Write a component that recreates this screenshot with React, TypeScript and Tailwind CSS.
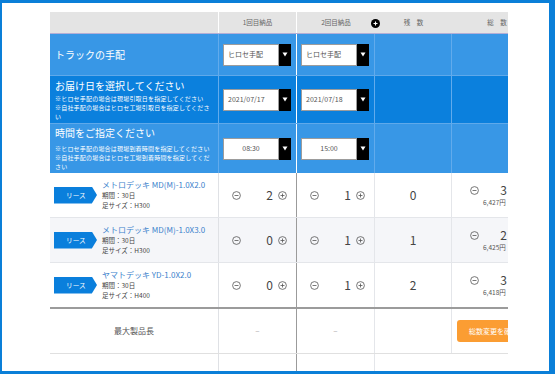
import React from 'react';

const C1 = 'w-[169px] shrink-0';
const C2 = 'w-[78px] shrink-0';
const C3 = 'w-[78px] shrink-0';
const C4 = 'w-[77px] shrink-0';
const C5 = 'w-[90px] shrink-0';

function MinusIcon() {
  return (
    <svg width="9" height="9" viewBox="0 0 9 9" className="shrink-0">
      <circle cx="4.5" cy="4.5" r="3.9" fill="none" stroke="#555" strokeWidth="0.8" />
      <line x1="2.5" y1="4.5" x2="6.5" y2="4.5" stroke="#555" strokeWidth="0.8" />
    </svg>
  );
}

function PlusIcon() {
  return (
    <svg width="9" height="9" viewBox="0 0 9 9" className="shrink-0">
      <circle cx="4.5" cy="4.5" r="3.9" fill="none" stroke="#555" strokeWidth="0.8" />
      <line x1="2.5" y1="4.5" x2="6.5" y2="4.5" stroke="#555" strokeWidth="0.8" />
      <line x1="4.5" y1="2.5" x2="4.5" y2="6.5" stroke="#555" strokeWidth="0.8" />
    </svg>
  );
}

function Select({ value, center }: { value: string; center?: boolean }) {
  return (
    <div className="flex h-[22px] w-[68px]">
      <div
        className={`flex flex-1 items-center border border-[#9c9c9c] bg-white text-[7px] text-[#555] ${
          center ? 'justify-center' : 'pl-[4px]'
        }`}
      >
        {value}
      </div>
      <div className="flex w-[12px] items-center justify-center bg-black">
        <svg width="6" height="5" viewBox="0 0 6 5">
          <polygon points="0.5,0.5 5.5,0.5 3,4.5" fill="#fff" />
        </svg>
      </div>
    </div>
  );
}

function Counter({ n }: { n: number }) {
  return (
    <div className="flex items-center pl-[13px]">
      <MinusIcon />
      <span className="w-[32px] text-right text-[12px] leading-none text-[#444]">{n}</span>
      <span className="ml-[5px]">
        <PlusIcon />
      </span>
    </div>
  );
}

const blueRows = [
  {
    title: 'トラックの手配',
    notes: [] as string[],
    a: 'ヒロセ手配',
    b: 'ヒロセ手配',
    bg: 'bg-[#3897e6]',
    h: 'h-[42px]',
    center: false,
  },
  {
    title: 'お届け日を選択してください',
    notes: [
      '※ヒロセ手配の場合は現場引取日を指定してください',
      '※自社手配の場合はヒロセ工場引取日を指定してくださ',
      'い',
    ],
    a: '2021/07/17',
    b: '2021/07/18',
    bg: 'bg-[#0b80dd]',
    h: 'h-[48px]',
    center: false,
  },
  {
    title: '時間をご指定ください',
    notes: [
      '※ヒロセ手配の場合は現場到着時間を指定してください',
      '※自社手配の場合はヒロセ工場到着時間を指定してくだ',
      'さい',
    ],
    a: '08:30',
    b: '15:00',
    bg: 'bg-[#3897e6]',
    h: 'h-[49px]',
    center: true,
  },
];

const products = [
  { name: 'メトロデッキ MD(M)-1.0X2.0', size: 'H300', a: 2, b: 1, rest: 0, total: 3, price: '6,427円', bg: 'bg-white' },
  { name: 'メトロデッキ MD(M)-1.0X3.0', size: 'H300', a: 0, b: 1, rest: 1, total: 2, price: '6,425円', bg: 'bg-[#f5f6f9]' },
  { name: 'ヤマトデッキ YD-1.0X2.0', size: 'H400', a: 0, b: 1, rest: 2, total: 3, price: '6,418円', bg: 'bg-white' },
];

export default function App() {
  return (
    <div className="h-[374px] w-[555px] overflow-hidden border-b-[3px] border-l-2 border-r-[6px] border-t-[3px] border-[#0a7fd8] bg-white font-['Noto_Sans_CJK_JP','Noto_Sans',sans-serif]">
      <div className="pl-[48px] pt-[9px]">
        <div className="w-[458px] overflow-hidden">
          <div className="w-[492px]">
            {/* Header */}
            <div className="relative flex h-[22px] border-b border-[#b3aed6] bg-[#e4e4e4] text-[6.5px] text-[#666]">
              <div className={`${C1} border-r border-white`} />
              <div className={`${C2} flex items-center justify-center border-r border-white`}>1回目納品</div>
              <div className={`${C3} flex items-center justify-center`}>2回目納品</div>
              <div className={`${C4} flex items-center justify-center`}>残　数</div>
              <div className={`${C5} flex items-center justify-center`}>総　数</div>
              <div className="absolute left-[321px] top-[7px] flex h-[9px] w-[9px] items-center justify-center rounded-full bg-black">
                <svg width="5" height="5" viewBox="0 0 5 5">
                  <line x1="0.5" y1="2.5" x2="4.5" y2="2.5" stroke="#fff" strokeWidth="1.1" />
                  <line x1="2.5" y1="0.5" x2="2.5" y2="4.5" stroke="#fff" strokeWidth="1.1" />
                </svg>
              </div>
            </div>

            {/* Delivery settings */}
            {blueRows.map((r, i) => (
              <div
                key={r.title}
                className={`flex ${r.h} ${r.bg} ${i < 2 ? 'border-b border-[#5fa9ea]' : ''} text-white`}
              >
                <div
                  className={`${C1} flex flex-col border-r border-[#62abec] pl-[5px] ${
                    r.notes.length ? (i === 1 ? 'pt-[3px]' : 'pt-[2px]') : 'justify-center'
                  }`}
                >
                  <div className="text-[10px] leading-[14px]">{r.title}</div>
                  {r.notes.length > 0 && (
                    <div className={`${i === 1 ? 'mt-[1px]' : 'mt-[4px]'} text-[6px] leading-[9px] tracking-[0.2px]`}>
                      {r.notes.map((n) => (
                        <div key={n} className="whitespace-nowrap">
                          {n}
                        </div>
                      ))}
                    </div>
                  )}
                </div>
                <div className={`${C2} flex items-center border-r border-white pl-[4px]`}>
                  <Select value={r.a} center={r.center} />
                </div>
                <div className={`${C3} flex items-center border-r border-[#62abec] pl-[4px]`}>
                  <Select value={r.b} center={r.center} />
                </div>
                <div className={`${C4} border-r border-[#62abec]`} />
                <div className={C5} />
              </div>
            ))}

            {/* Products */}
            {products.map((p, i) => (
              <div
                key={p.name}
                className={`flex h-[45px] ${p.bg} ${
                  i === 2 ? 'h-[46px] border-b-2 border-[#9b9b9b]' : 'border-b border-[#e4e6ea]'
                }`}
              >
                <div className={`${C1} flex items-center border-r border-[#dfe1e5] pl-[4px]`}>
                  <div className="flex h-[17px] w-[43px] shrink-0 items-center pl-[12px] text-[6.7px] text-white bg-[#0a7fdc] [clip-path:polygon(0_0,88%_0,100%_50%,88%_100%,0_100%)]">
                    リース
                  </div>
                  <div className="ml-[5px] leading-[10px]">
                    <div className="whitespace-nowrap text-[8px] text-[#3c82cc]">{p.name}</div>
                    <div className="text-[6.5px] text-[#444]">期間：30日</div>
                    <div className="text-[6.5px] text-[#444]">足サイズ：{p.size}</div>
                  </div>
                </div>
                <div className={`${C2} flex items-center border-r border-[#9b9b9b]`}>
                  <Counter n={p.a} />
                </div>
                <div className={`${C3} flex items-center border-r border-[#e4e6ea]`}>
                  <Counter n={p.b} />
                </div>
                <div className={`${C4} flex items-center justify-center border-r border-[#e4e6ea] text-[12px] text-[#444]`}>
                  {p.rest}
                </div>
                <div className={`${C5} flex flex-col justify-center pl-[18px]`}>
                  <div className="flex items-center">
                    <MinusIcon />
                    <span className="w-[28px] text-right text-[12px] leading-none text-[#444]">{p.total}</span>
                  </div>
                  <div className="mt-[3px] pl-[13px] text-[6.5px] leading-none text-[#555]">{p.price}</div>
                </div>
              </div>
            ))}

            {/* Max length */}
            <div className="flex h-[45px] border-b border-[#e0e0e0]">
              <div className={`${C1} flex items-center justify-center border-r border-[#dfe1e5] text-[8px] text-[#555]`}>
                最大製品長
              </div>
              <div className={`${C2} flex items-center justify-center border-r border-[#9b9b9b] text-[8px] text-[#aaa]`}>
                –
              </div>
              <div className={`${C3} flex items-center justify-center border-r border-[#e4e6ea] text-[8px] text-[#aaa]`}>
                –
              </div>
              <div className={`${C4} border-r border-[#e4e6ea]`} />
              <div className={`${C5} flex items-center pl-[5px]`}>
                <div className="flex h-[22px] w-[84px] items-center rounded-[3px] bg-[#fb9d33] pl-[12px] text-[7px] text-white">
                  総数変更を確定
                </div>
              </div>
            </div>
            <div className="flex h-[20px]">
              <div className={`${C1} border-r border-[#dfe1e5]`} />
              <div className={`${C2} border-r border-[#9b9b9b]`} />
              <div className={`${C3} border-r border-[#e4e6ea]`} />
              <div className={C4} />
            </div>
          </div>
        </div>
      </div>
    </div>
  );
}
